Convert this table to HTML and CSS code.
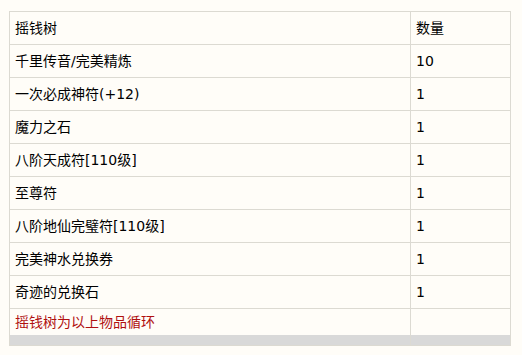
FILE: index.html
```html
<!DOCTYPE html>
<html lang="zh">
<head>
<meta charset="utf-8">
<title>摇钱树</title>
<link rel="stylesheet" href="styles.css">
</head>
<body>
<table class="tbl">
  <colgroup><col class="c1"><col class="c2"></colgroup>
  <tr><td>摇钱树</td><td>数量</td></tr>
  <tr><td>千里传音/完美精炼</td><td>10</td></tr>
  <tr><td>一次必成神符(+12)</td><td>1</td></tr>
  <tr><td>魔力之石</td><td>1</td></tr>
  <tr><td>八阶天成符[110级]</td><td>1</td></tr>
  <tr><td>至尊符</td><td>1</td></tr>
  <tr><td>八阶地仙完璧符[110级]</td><td>1</td></tr>
  <tr><td>完美神水兑换券</td><td>1</td></tr>
  <tr><td>奇迹的兑换石</td><td>1</td></tr>
  <tr class="note"><td>摇钱树为以上物品循环</td><td></td></tr>
  <tr class="bar"><td></td><td></td></tr>
</table>
</body>
</html>
```
FILE: styles.css
```css
html, body {
  margin: 0;
  padding: 0;
  background: #fffdf8;
}
body {
  padding: 11px 0 0 9px;
  font-family: "DejaVu Sans", "Noto Sans CJK SC", sans-serif;
  font-size: 14px;
  color: #000;
}
.tbl {
  border-collapse: collapse;
  width: 501px;
  table-layout: fixed;
}
.c1 { width: 401px; }
.c2 { width: 100px; }
.tbl td {
  border: 1px solid #dcdad2;
  padding: 0 0 0 5px;
  vertical-align: middle;
  line-height: 16px;
  box-sizing: border-box;
  height: 33px;
}
.tbl .note td {
  color: #b01010;
  height: 26px;
  vertical-align: top;
  padding-top: 5px;
  border-bottom: none;
}
.tbl .bar td {
  height: 11px;
  background: #d9d9d9;
  border-top: none;
}
```
